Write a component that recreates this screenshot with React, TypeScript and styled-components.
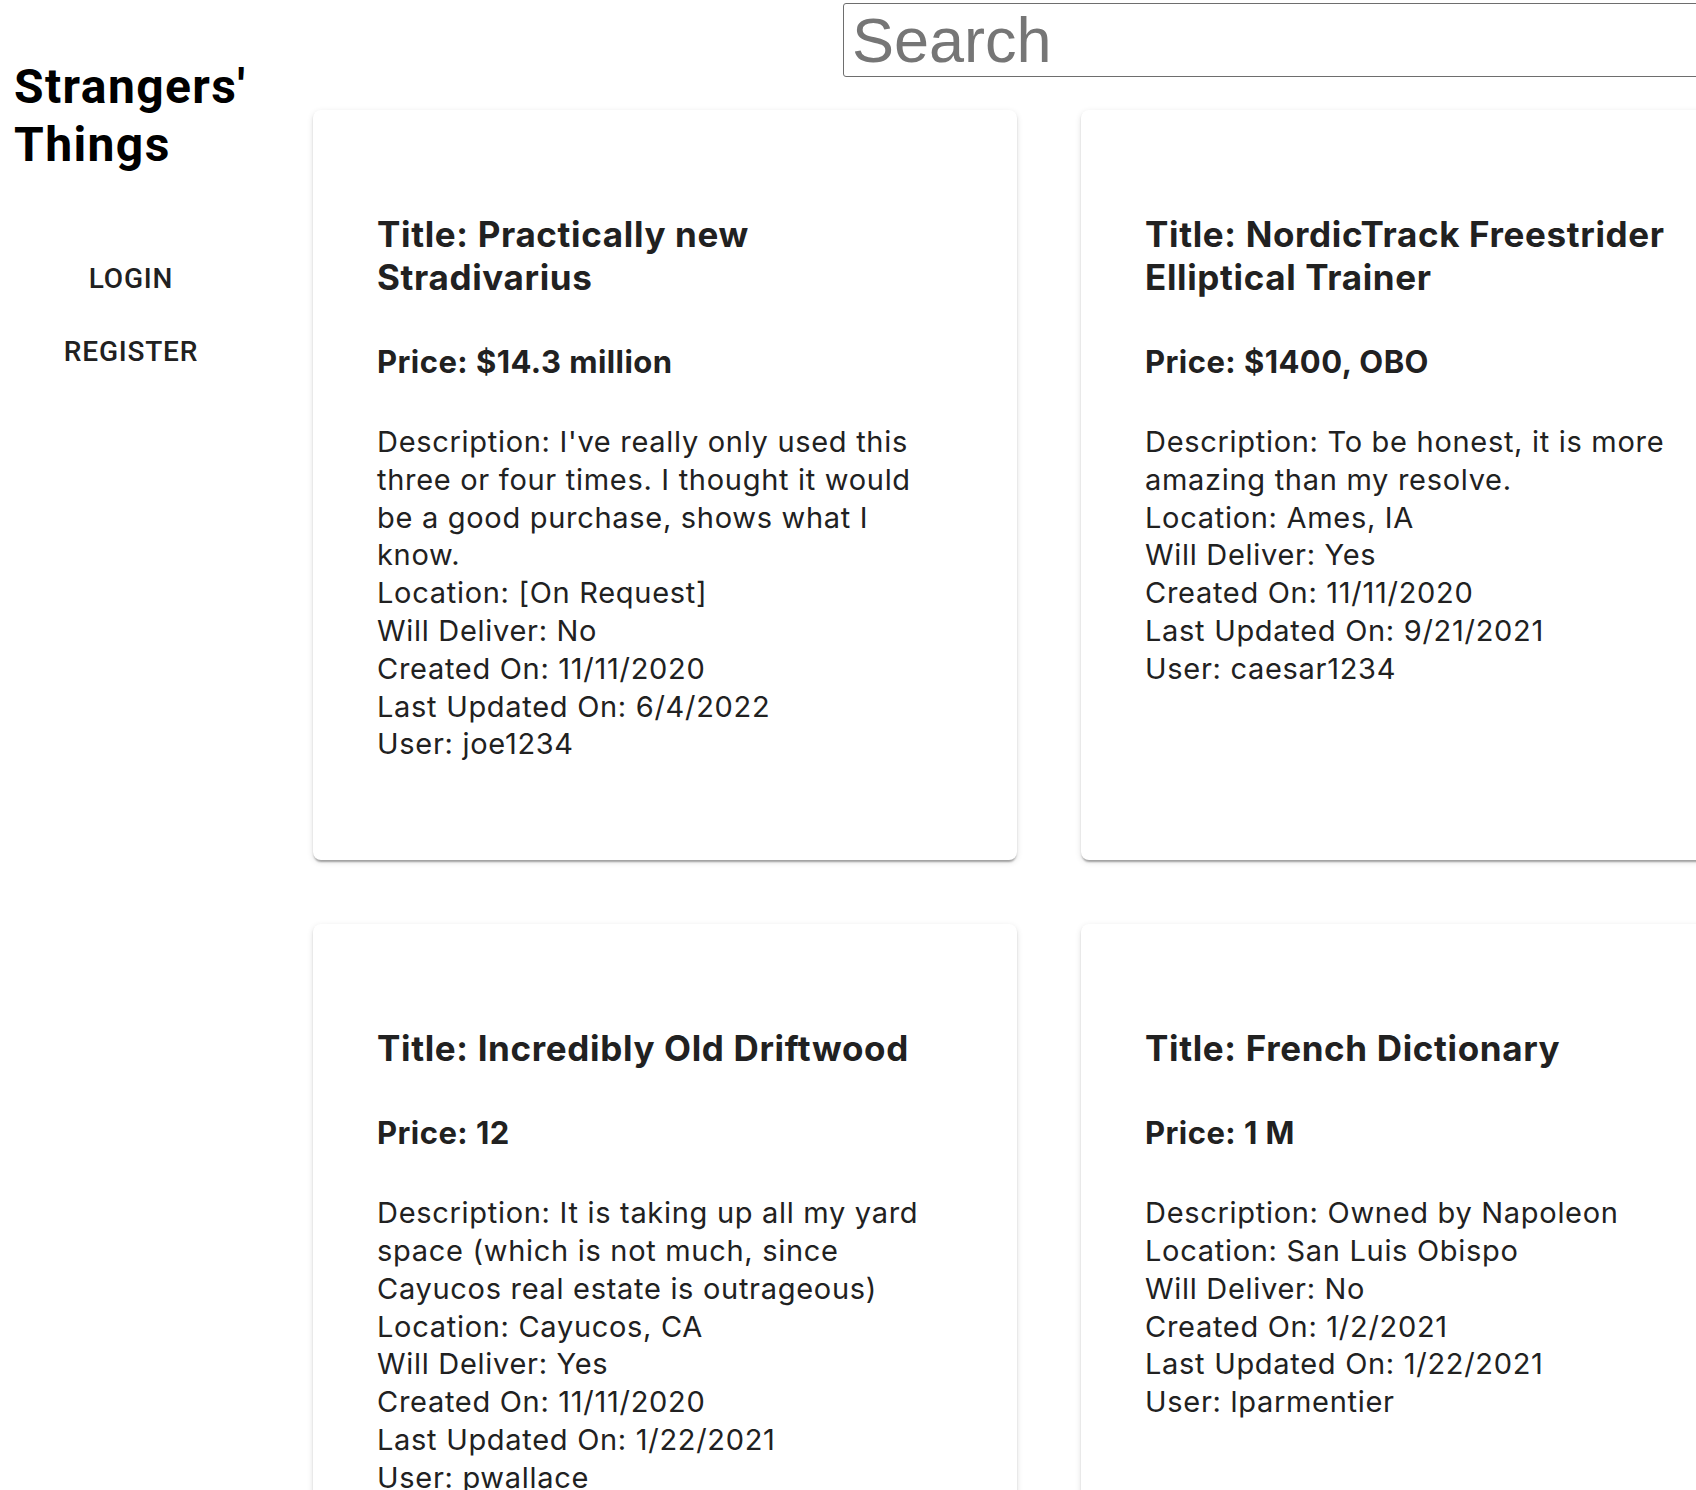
import React from "react";
import styled, { createGlobalStyle } from "styled-components";

const GlobalStyle = createGlobalStyle`
  html, body {
    margin: 0;
    padding: 0;
    background: #ffffff;
    overflow: hidden;
  }
  body {
    font-family: Inter, "Noto Sans", sans-serif;
    color: #212121;
  }
  * { box-sizing: border-box; }
`;

const Page = styled.div`
  display: grid;
  grid-template-columns: 313px auto;
  grid-template-areas:
    "side search"
    "side cards";
  width: 1900px;
`;

const Sidebar = styled.aside`
  grid-area: side;
  width: 262px;
  padding-top: 58px;
  display: flex;
  flex-direction: column;
`;

const Brand = styled.h1`
  margin: 0;
  padding-left: 14px;
  font-family: Roboto, "Liberation Sans", sans-serif;
  font-weight: 700;
  font-size: 48px;
  line-height: 1.2;
  letter-spacing: 1.4px;
  color: #000;
`;

const Nav = styled.nav`
  margin-top: 69px;
  display: flex;
  flex-direction: column;
  align-items: center;
`;

const NavButton = styled.button`
  border: 0;
  background: transparent;
  padding: 12px 16px;
  font-family: Roboto, "Liberation Sans", sans-serif;
  font-weight: 500;
  font-size: 28px;
  line-height: 1.75;
  letter-spacing: 0.8px;
  text-transform: uppercase;
  color: #212121;
  cursor: pointer;
`;

const SearchCell = styled.div`
  grid-area: search;
  padding: 3px 0 0 530px;
`;

const SearchInput = styled.input`
  display: block;
  width: 1000px;
  margin: 0;
  padding: 0 8px;
  border: 1px solid #6e6e6e;
  border-radius: 3px;
  font-family: "Liberation Sans", Arial, sans-serif;
  font-size: 63px;
  line-height: normal;
  color: #222;
  background: #fff;
  outline: none;

  &::placeholder {
    color: #767676;
  }
`;

const CardGrid = styled.main`
  grid-area: cards;
  margin-top: 33px;
  display: grid;
  grid-template-columns: 704px 704px;
  column-gap: 64px;
  row-gap: 64px;
  align-items: stretch;
`;

const Card = styled.article`
  background: #fff;
  border-radius: 8px;
  box-shadow: 0 4px 2px -2px rgba(0, 0, 0, 0.2), 0 2px 2px 0 rgba(0, 0, 0, 0.14),
    0 2px 6px 0 rgba(0, 0, 0, 0.12);
  padding: 103px 88px 97px 64px;
  color: #212121;
`;

const Title = styled.h2`
  margin: 0;
  font-family: Inter, "Noto Sans", sans-serif;
  font-weight: 700;
  font-size: 35px;
  line-height: 43px;
  letter-spacing: 0.65px;
`;

const Price = styled.h3`
  margin: 43.5px 0 0;
  font-family: Inter, "Noto Sans", sans-serif;
  font-weight: 700;
  font-size: 31px;
  line-height: 38px;
  letter-spacing: 0.45px;
`;

const Details = styled.div`
  margin-top: 42.5px;
  font-family: Inter, "Noto Sans", sans-serif;
  font-weight: 400;
  font-size: 29px;
  line-height: 37.8px;
  letter-spacing: 0.7px;
`;

const DetailLine = styled.div``;

type Post = {
  title: string;
  price: string;
  description: string;
  location: string;
  willDeliver: boolean;
  created: string;
  updated: string;
  user: string;
};

const posts: Post[] = [
  {
    title: "Practically new Stradivarius",
    price: "$14.3 million",
    description:
      "I've really only used this three or four times. I thought it would be a good purchase, shows what I know.",
    location: "[On Request]",
    willDeliver: false,
    created: "11/11/2020",
    updated: "6/4/2022",
    user: "joe1234",
  },
  {
    title: "NordicTrack Freestrider Elliptical Trainer",
    price: "$1400, OBO",
    description: "To be honest, it is more amazing than my resolve.",
    location: "Ames, IA",
    willDeliver: true,
    created: "11/11/2020",
    updated: "9/21/2021",
    user: "caesar1234",
  },
  {
    title: "Incredibly Old Driftwood",
    price: "12",
    description:
      "It is taking up all my yard space (which is not much, since Cayucos real estate is outrageous)",
    location: "Cayucos, CA",
    willDeliver: true,
    created: "11/11/2020",
    updated: "1/22/2021",
    user: "pwallace",
  },
  {
    title: "French Dictionary",
    price: "1 M",
    description: "Owned by Napoleon",
    location: "San Luis Obispo",
    willDeliver: false,
    created: "1/2/2021",
    updated: "1/22/2021",
    user: "lparmentier",
  },
];

const PostCard: React.FC<{ post: Post }> = ({ post }) => (
  <Card>
    <Title>Title: {post.title}</Title>
    <Price>Price: {post.price}</Price>
    <Details>
      <DetailLine>Description: {post.description}</DetailLine>
      <DetailLine>Location: {post.location}</DetailLine>
      <DetailLine>Will Deliver: {post.willDeliver ? "Yes" : "No"}</DetailLine>
      <DetailLine>Created On: {post.created}</DetailLine>
      <DetailLine>Last Updated On: {post.updated}</DetailLine>
      <DetailLine>User: {post.user}</DetailLine>
    </Details>
  </Card>
);

export default function App() {
  return (
    <>
      <GlobalStyle />
      <Page>
        <Sidebar>
          <Brand>
            Strangers'
            <br />
            Things
          </Brand>
          <Nav>
            <NavButton>Login</NavButton>
            <NavButton>Register</NavButton>
          </Nav>
        </Sidebar>
        <SearchCell>
          <SearchInput placeholder="Search" />
        </SearchCell>
        <CardGrid>
          {posts.map((p) => (
            <PostCard key={p.user} post={p} />
          ))}
        </CardGrid>
      </Page>
    </>
  );
}
